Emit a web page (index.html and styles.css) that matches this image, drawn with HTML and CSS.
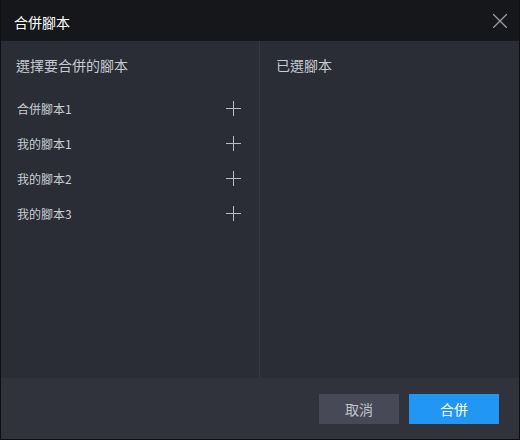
FILE: index.html
```html
<!DOCTYPE html>
<html>
<head>
<meta charset="utf-8">
<link rel="stylesheet" href="styles.css">
</head>
<body>
<div class="dialog">
  <div class="header">
    <span class="title">合併腳本</span>
    <svg class="close" width="14" height="14" viewBox="0 0 14 14"><path d="M0 0L14 14M14 0L0 14" stroke="#9a9ca3" stroke-width="1.3" fill="none"/></svg>
  </div>
  <div class="body">
    <div class="panel left">
      <div class="panel-title">選擇要合併的腳本</div>
      <ul class="list">
        <li class="item"><span>合併腳本1</span><svg class="plus" width="15" height="15" viewBox="0 0 15 15"><path d="M7.5 0V15M0 7.5H15" stroke="#b8bcc4" stroke-width="1" fill="none"/></svg></li>
        <li class="item"><span>我的腳本1</span><svg class="plus" width="15" height="15" viewBox="0 0 15 15"><path d="M7.5 0V15M0 7.5H15" stroke="#b8bcc4" stroke-width="1" fill="none"/></svg></li>
        <li class="item"><span>我的腳本2</span><svg class="plus" width="15" height="15" viewBox="0 0 15 15"><path d="M7.5 0V15M0 7.5H15" stroke="#b8bcc4" stroke-width="1" fill="none"/></svg></li>
        <li class="item"><span>我的腳本3</span><svg class="plus" width="15" height="15" viewBox="0 0 15 15"><path d="M7.5 0V15M0 7.5H15" stroke="#b8bcc4" stroke-width="1" fill="none"/></svg></li>
      </ul>
    </div>
    <div class="panel right">
      <div class="panel-title">已選腳本</div>
    </div>
  </div>
  <div class="footer">
    <button class="btn cancel">取消</button>
    <button class="btn primary">合併</button>
  </div>
</div>
</body>
</html>
```
FILE: styles.css
```css
* { box-sizing: border-box; }
html, body { margin: 0; padding: 0; background: #0f1013; }
body { font-family: "Noto Sans CJK TC", "Noto Sans", sans-serif; }
.dialog {
  width: 520px;
  height: 440px;
  display: flex;
  flex-direction: column;
  border: 1px solid #0e0f11;
  border-top: none;
  background: #2a2d35;
}
.header {
  height: 41px;
  flex: none;
  background: #16171b;
  display: flex;
  align-items: center;
  justify-content: space-between;
  padding: 1px 12px 0 13px;
}
.title { color: #ffffff; font-size: 14px; line-height: 20px; margin-top: 1px; }
.close { display: block; }
.body {
  flex: 1;
  display: flex;
  min-height: 0;
}
.panel { padding-top: 14px; }
.left { width: 259px; border-right: 1px solid #363941; padding-left: 15px; padding-right: 18px; }
.right { flex: 1; padding-left: 16px; }
.panel-title { color: #c5cad3; font-size: 14px; line-height: 20px; }
.list { list-style: none; margin: 16px 0 0 0; padding: 0; }
.item {
  height: 35px;
  display: flex;
  align-items: center;
  justify-content: space-between;
  color: #c9ced6;
  font-size: 12px;
  padding-left: 1px;
}
.plus { display: block; }
.footer {
  height: 61px;
  flex: none;
  background: #30333c;
  display: flex;
  align-items: center;
  justify-content: flex-end;
  gap: 10px;
  padding: 1px 20px 0 0;
}
.btn {
  height: 30px;
  border: none;
  font-family: inherit;
  font-size: 14px;
  padding: 0;
}
.cancel { width: 80px; background: #474a56; color: #bfc3cb; }
.primary { width: 90px; background: #2196f3; color: #ffffff; }
```
